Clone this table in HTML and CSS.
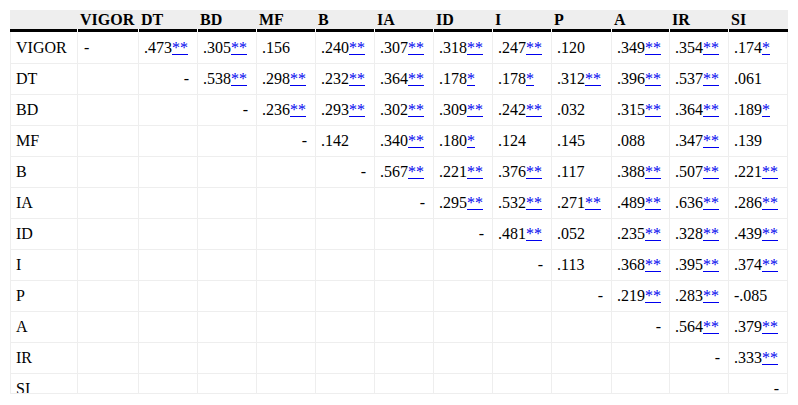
FILE: index.html
```html
<!DOCTYPE html>
<html>
<head>
<meta charset="utf-8">
<link rel="stylesheet" href="styles.css">
</head>
<body>
<div class="wrap">
<table class="corr">
<thead>
<tr>
<th class="c1"></th><th class="c2">VIGOR</th><th>DT</th><th>BD</th><th>MF</th><th>B</th><th>IA</th><th>ID</th><th>I</th><th class="c9">P</th><th class="c10">A</th><th>IR</th><th class="last">SI</th>
</tr>
</thead>
<tbody>
<tr class="first"><td>VIGOR</td><td class="dl">-</td><td>.473<a href="#">**</a></td><td>.305<a href="#">**</a></td><td>.156</td><td>.240<a href="#">**</a></td><td>.307<a href="#">**</a></td><td>.318<a href="#">**</a></td><td>.247<a href="#">**</a></td><td>.120</td><td>.349<a href="#">**</a></td><td>.354<a href="#">**</a></td><td>.174<a href="#">*</a></td></tr>
<tr><td>DT</td><td></td><td class="d">-</td><td>.538<a href="#">**</a></td><td>.298<a href="#">**</a></td><td>.232<a href="#">**</a></td><td>.364<a href="#">**</a></td><td>.178<a href="#">*</a></td><td>.178<a href="#">*</a></td><td>.312<a href="#">**</a></td><td>.396<a href="#">**</a></td><td>.537<a href="#">**</a></td><td>.061</td></tr>
<tr><td>BD</td><td></td><td></td><td class="d">-</td><td>.236<a href="#">**</a></td><td>.293<a href="#">**</a></td><td>.302<a href="#">**</a></td><td>.309<a href="#">**</a></td><td>.242<a href="#">**</a></td><td>.032</td><td>.315<a href="#">**</a></td><td>.364<a href="#">**</a></td><td>.189<a href="#">*</a></td></tr>
<tr><td>MF</td><td></td><td></td><td></td><td class="d">-</td><td>.142</td><td>.340<a href="#">**</a></td><td>.180<a href="#">*</a></td><td>.124</td><td>.145</td><td>.088</td><td>.347<a href="#">**</a></td><td>.139</td></tr>
<tr><td>B</td><td></td><td></td><td></td><td></td><td class="d">-</td><td>.567<a href="#">**</a></td><td>.221<a href="#">**</a></td><td>.376<a href="#">**</a></td><td>.117</td><td>.388<a href="#">**</a></td><td>.507<a href="#">**</a></td><td>.221<a href="#">**</a></td></tr>
<tr><td>IA</td><td></td><td></td><td></td><td></td><td></td><td class="d">-</td><td>.295<a href="#">**</a></td><td>.532<a href="#">**</a></td><td>.271<a href="#">**</a></td><td>.489<a href="#">**</a></td><td>.636<a href="#">**</a></td><td>.286<a href="#">**</a></td></tr>
<tr><td>ID</td><td></td><td></td><td></td><td></td><td></td><td></td><td class="d">-</td><td>.481<a href="#">**</a></td><td>.052</td><td>.235<a href="#">**</a></td><td>.328<a href="#">**</a></td><td>.439<a href="#">**</a></td></tr>
<tr><td>I</td><td></td><td></td><td></td><td></td><td></td><td></td><td></td><td class="d">-</td><td>.113</td><td>.368<a href="#">**</a></td><td>.395<a href="#">**</a></td><td>.374<a href="#">**</a></td></tr>
<tr><td>P</td><td></td><td></td><td></td><td></td><td></td><td></td><td></td><td></td><td class="d">-</td><td>.219<a href="#">**</a></td><td>.283<a href="#">**</a></td><td>-.085</td></tr>
<tr><td>A</td><td></td><td></td><td></td><td></td><td></td><td></td><td></td><td></td><td></td><td class="d">-</td><td>.564<a href="#">**</a></td><td>.379<a href="#">**</a></td></tr>
<tr><td>IR</td><td></td><td></td><td></td><td></td><td></td><td></td><td></td><td></td><td></td><td></td><td class="d">-</td><td>.333<a href="#">**</a></td></tr>
<tr><td>SI</td><td></td><td></td><td></td><td></td><td></td><td></td><td></td><td></td><td></td><td></td><td></td><td class="d">-</td></tr>
</tbody>
</table>
</div>
</body>
</html>
```

FILE: styles.css
```css
html, body {
  margin: 0;
  padding: 0;
  background: #fff;
}
body {
  padding: 10px 0 0 10px;
  font-family: "Liberation Serif", "Times New Roman", serif;
  font-size: 16px;
  color: #000;
}
.wrap {
  width: 778px;
  height: 383px;
  overflow: hidden;
  border-bottom: 1px solid #eee;
}
.corr {
  border-collapse: separate;
  border-spacing: 0;
  table-layout: fixed;
  width: 778px;
}
.corr th {
  box-sizing: border-box;
  width: 59px;
  height: 22px;
  padding: 0 0 3px 2px;
  text-align: left;
  font-weight: bold;
  line-height: 19px;
  vertical-align: top;
  white-space: nowrap;
  background:
    linear-gradient(#000, #000) left bottom / calc(100% - 1px) 3px no-repeat,
    linear-gradient(#eee, #eee) left top / 100% calc(100% - 3px) no-repeat;
}
.corr th.c1 { width: 68px; }
.corr th.c2 { width: 61px; }
.corr th.c9 { width: 60px; }
.corr th.c10 { width: 58px; }
.corr th.last {
  background:
    linear-gradient(#000, #000) left bottom / 100% 3px no-repeat,
    linear-gradient(#eee, #eee) left top / 100% calc(100% - 3px) no-repeat;
}
.corr td {
  box-sizing: border-box;
  height: 31px;
  padding: 0 5px;
  border-right: 1px solid #eee;
  border-bottom: 1px solid #eee;
  text-align: left;
  vertical-align: middle;
  white-space: nowrap;
  line-height: 18px;
}
.corr td:first-child {
  border-left: 1px solid #eee;
  padding-left: 5px;
}
.corr tr.first td {
  height: 32px;
  padding-top: 1px;
}
.corr td.d {
  text-align: right;
  padding-right: 8px;
}
.corr td.dl {
  padding-left: 6px;
}
.corr a {
  color: #0000ee;
  text-decoration: underline;
}
```
